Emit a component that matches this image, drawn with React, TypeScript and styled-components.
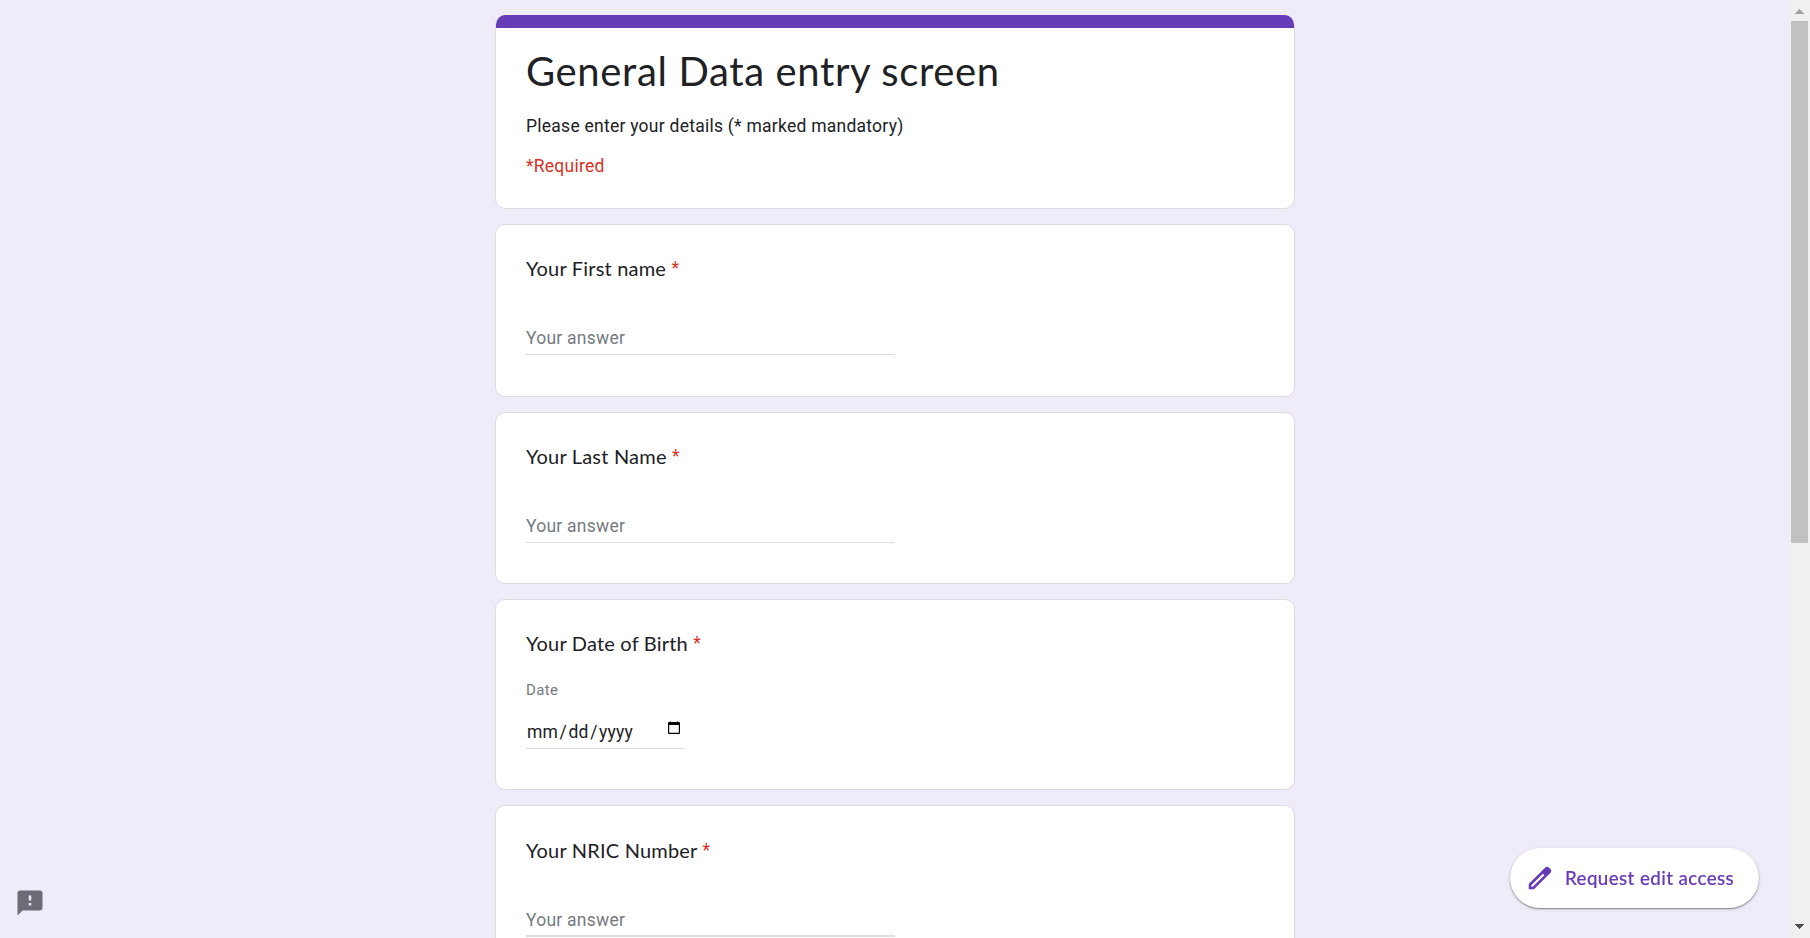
import React from "react";
import styled, { createGlobalStyle } from "styled-components";

const GlobalStyle = createGlobalStyle`
  * { box-sizing: border-box; }
  html, body, #root { margin: 0; height: 100%; }
  body {
    overflow: hidden;
    background: #f0ebf8;
    color: #202124;
    font-family: Roboto, "Liberation Sans", sans-serif;
  }
`;

const Page = styled.div`
  display: flex;
  height: 938px;
  overflow: hidden;
`;

const Main = styled.main`
  flex: 1;
  display: flex;
  flex-direction: column;
  align-items: center;
  gap: 15px;
  padding: 15px 0 0 1px;
  overflow: hidden;
`;

const Card = styled.section<{ $height: number }>`
  flex: none;
  width: 800px;
  height: ${(p) => p.$height}px;
  padding: 29px 30px 0;
  background: #fff;
  border: 1px solid #dadce0;
  border-radius: 10px;
`;

const HeaderCard = styled(Card)`
  padding: 0;
  border-top: 0;
  overflow: hidden;
`;

const Accent = styled.div`
  height: 13px;
  margin: 0 -1px;
  background: #673ab7;
`;

const HeaderBody = styled.div`
  padding: 18px 30px 0;
`;

const Title = styled.h1`
  margin: 0;
  font: 400 40px/50px Lato, sans-serif;
  letter-spacing: 0.63px;
  white-space: nowrap;
`;

const Description = styled.p`
  margin: 18px 0 0;
  font-size: 17.5px;
  line-height: 25px;
  letter-spacing: 0.25px;
`;

const Required = styled.p`
  margin: 15px 0 0;
  font-size: 17.5px;
  line-height: 25px;
  letter-spacing: 0.25px;
  color: #d93025;
`;

const Question = styled.h2<{ $offset?: number }>`
  height: 30px;
  margin: ${(p) => p.$offset ?? 0}px 0 0;
  font: 400 20px/28px Lato, sans-serif;
  letter-spacing: 0.2px;
  white-space: nowrap;
`;

const Star = styled.span`
  color: #d93025;
  font-family: Roboto, sans-serif;
  font-size: 17.5px;
  line-height: 0;
  vertical-align: 2px;
`;

const Answer = styled.div<{ $line?: number }>`
  width: 369px;
  height: 32px;
  margin-top: 39px;
  border-bottom: ${(p) => p.$line ?? 1}px solid #dddee0;
  font-size: 17.5px;
  line-height: 30px;
  letter-spacing: 0.25px;
  color: #757a7f;
`;

const DateLabel = styled.div`
  margin-top: 21px;
  font-size: 15px;
  line-height: 20px;
  letter-spacing: 0.4px;
  color: #757a7f;
`;

const DateField = styled.div`
  display: flex;
  justify-content: space-between;
  width: 159px;
  height: 39px;
  margin-top: 10px;
  padding: 7px 4px 0 1px;
  border-bottom: 1px solid #dddee0;
  font-size: 17.5px;
  line-height: 30px;
  letter-spacing: 0.2px;
`;

const DateText = styled.span`
  white-space: pre;
`;

const Slash = styled.span`
  margin: 0 1.5px;
`;

const CalendarIcon = styled.svg`
  width: 14px;
  height: 14px;
  margin-top: 4px;
`;

const EditButton = styled.button`
  position: fixed;
  left: 1510px;
  top: 848px;
  display: flex;
  align-items: center;
  gap: 10px;
  width: 249px;
  height: 60px;
  padding: 0 0 0 15px;
  border: 0;
  border-radius: 30px;
  background: #fff;
  color: #673ab7;
  box-shadow: 0 1px 1.5px rgba(0, 0, 0, 0.42), 0 1px 4px rgba(0, 0, 0, 0.1);
  font: 500 18.75px/30px Lato, sans-serif;
  letter-spacing: 0.4px;
  -webkit-text-stroke: 0.15px currentColor;
  white-space: nowrap;
`;

const Icon = styled.svg`
  flex: none;
  width: 30px;
  height: 30px;
  fill: currentColor;
`;

const Feedback = styled.div`
  position: fixed;
  left: 15px;
  top: 888px;
  height: 30px;
  color: #6f6b76;
`;

const ScrollTrack = styled.aside`
  flex: none;
  display: flex;
  flex-direction: column;
  align-items: center;
  width: 21px;
  padding: 9px 0;
  background: #f0f0f0;
`;

const Arrow = styled.svg`
  flex: none;
  width: 9px;
  height: 5px;
`;

const Thumb = styled.div`
  width: 17px;
  height: 522px;
  margin: 7px 0 auto;
  background: #c1c1c1;
`;

type TextQuestionProps = { label: string; height: number; offset?: number; line?: number };

function TextQuestion({ label, height, offset, line }: TextQuestionProps) {
  return (
    <Card $height={height}>
      <Question $offset={offset}>
        {label} <Star>*</Star>
      </Question>
      <Answer $line={line}>Your answer</Answer>
    </Card>
  );
}

export default function App() {
  return (
    <Page>
      <GlobalStyle />
      <Main>
        <HeaderCard $height={194}>
          <Accent />
          <HeaderBody>
            <Title>General Data entry screen</Title>
            <Description>Please enter your details (* marked mandatory)</Description>
            <Required>*Required</Required>
          </HeaderBody>
        </HeaderCard>
        <TextQuestion label="Your First name" height={173} />
        <TextQuestion label="Your Last Name" height={172} />
        <Card $height={191}>
          <Question>
            Your Date of Birth <Star>*</Star>
          </Question>
          <DateLabel>Date</DateLabel>
          <DateField>
            <DateText>
              mm<Slash>/</Slash>dd<Slash>/</Slash>yyyy
            </DateText>
            <CalendarIcon viewBox="0 0 14 14">
              <path d="M2 1h1.5V0H4v1h6V0h.6v1H12q1 0 1 1v10q0 1-1 1H2q-1 0-1-1V2q0-1 1-1zm.2 3v7.8h9.6V4z" />
            </CalendarIcon>
          </DateField>
        </Card>
        <TextQuestion label="Your NRIC Number" height={173} offset={1} line={2} />
      </Main>
      <ScrollTrack>
        <Arrow viewBox="0 0 9 5" shapeRendering="crispEdges" fill="#a3a3a3">
          <path d="M4.5 0L9 5H0z" />
        </Arrow>
        <Thumb />
        <Arrow viewBox="0 0 9 5" shapeRendering="crispEdges" fill="#505050">
          <path d="M0 0h9L4.5 5z" />
        </Arrow>
      </ScrollTrack>
      <EditButton>
        <Icon viewBox="0 0 24 24">
          <path d="M20.41 4.94l-1.35-1.35c-.78-.78-2.05-.78-2.83 0L3 16.82V21h4.18L20.41 7.77c.79-.78.79-2.05 0-2.83zM6.2 19H5v-1.2l9.3-9.3 1.2 1.2z" />
        </Icon>
        Request edit access
      </EditButton>
      <Feedback>
        <Icon viewBox="0 0 24 24">
          <path d="M20 2H4c-1.1 0-1.99.9-1.99 2L2 22l4-4h14c1.1 0 2-.9 2-2V4c0-1.1-.9-2-2-2zm-7 12h-2v-2h2v2zm0-4h-2V6h2v4z" />
        </Icon>
      </Feedback>
    </Page>
  );
}
